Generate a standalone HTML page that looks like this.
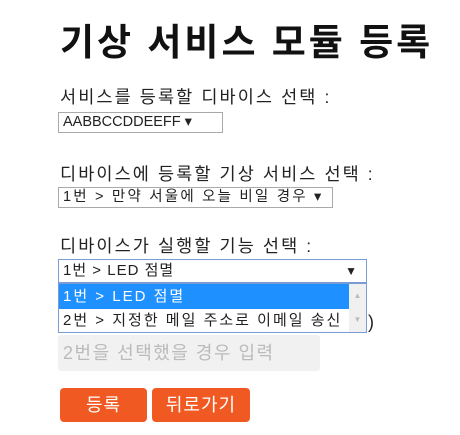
<!DOCTYPE html>
<html><head><meta charset="utf-8"><style>
body{margin:0;width:460px;height:435px;background:#fff;position:relative;overflow:hidden;font-family:"Liberation Sans","Noto Sans CJK KR",sans-serif;color:#222}
.a{position:absolute;white-space:nowrap}
h1{position:absolute;left:60px;top:12px;margin:0;font-size:37px;font-weight:bold;color:#111;letter-spacing:3px;font-family:"Liberation Sans","Noto Sans CJK KR",sans-serif}
.lbl{font-size:17.5px;color:#222;letter-spacing:2.1px}
.sel{border:1px solid #aaa;font-size:14.5px;height:19px;line-height:19px;padding-left:4px;box-sizing:border-box;background:#fff}
.btn{background:#f05a22;color:#fff;font-size:18px;text-align:center;border-radius:4px;height:34px;line-height:34px;letter-spacing:1px}
</style></head><body>
<h1>기상 서비스 모듈 등록</h1>
<div class="a lbl" style="left:60px;top:84px">서비스를 등록할 디바이스 선택 :</div>
<div class="a sel" style="left:58px;top:112px;width:165px;height:21px;line-height:19px">AABBCCDDEEFF ▾</div>
<div class="a lbl" style="left:60px;top:161px">디바이스에 등록할 기상 서비스 선택 :</div>
<div class="a sel" style="left:58px;top:187px;width:275px;height:21px;line-height:19px;letter-spacing:2.2px">1번 &gt; 만약 서울에 오늘 비일 경우 ▾</div>
<div class="a lbl" style="left:60px;top:233px">디바이스가 실행할 기능 선택 :</div>
<div class="a sel" style="left:58px;top:259px;width:309px;height:24px;line-height:22px;border-color:#7a9cd3;font-size:15px;letter-spacing:1px">1번 &gt; LED 점멸<span style="position:absolute;right:8px;font-size:12px">▼</span></div>
<div class="a" style="left:58px;top:283px;width:309px;height:50px;border:1px solid #7a9cd3;box-sizing:border-box;background:#fff;font-size:15px;letter-spacing:2px">
 <div style="position:absolute;left:0;top:0;width:291px;height:25px;line-height:25px;background:#1e90ff;color:#fff;padding-left:4px;box-sizing:border-box">1번 &gt; LED 점멸</div>
 <div style="position:absolute;left:0;top:24px;width:291px;height:25px;line-height:25px;padding-left:4px;box-sizing:border-box">2번 &gt; 지정한 메일 주소로 이메일 송신</div>
 <div style="position:absolute;right:0;top:0;width:17px;height:48px;background:#f0f0f0;color:#bbb;font-size:8px;text-align:center;line-height:24px;letter-spacing:0">▲<br>▼</div>
</div>
<div class="a" style="left:368px;top:312px;font-size:18px">)</div>
<div class="a" style="left:58px;top:335px;width:262px;height:36px;background:#f1f1f1;border-radius:3px;color:#bbb;font-size:18px;line-height:36px;padding-left:5px;box-sizing:border-box;letter-spacing:1.5px">2번을 선택했을 경우 입력</div>
<div class="a btn" style="left:60px;top:388px;width:87px">등록</div>
<div class="a btn" style="left:152px;top:388px;width:98px">뒤로가기</div>
</body></html>
